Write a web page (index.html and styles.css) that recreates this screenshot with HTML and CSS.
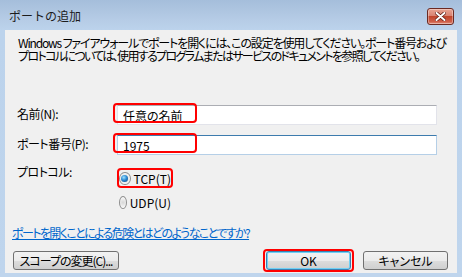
FILE: index.html
```html
<!DOCTYPE html>
<html lang="ja">
<head>
    <meta charset="UTF-8">
    <title>ポートの追加</title>
    <link rel="stylesheet" href="styles.css">
</head>
<body>
    <div class="window">
        <div class="titlebar">
            <span class="title">ポートの追加</span>
            <button class="close" aria-label="閉じる">
                <svg width="11" height="9" viewBox="0 0 11 9">
                    <path d="M1.5 1 L9.5 8 M9.5 1 L1.5 8" stroke="#5a1a12" stroke-width="3.4" stroke-linecap="round"/>
                    <path d="M1.5 1 L9.5 8 M9.5 1 L1.5 8" stroke="#fff" stroke-width="2" stroke-linecap="round"/>
                </svg>
            </button>
        </div>

        <div class="client">
            <p class="desc"><span class="line1">Windows ファイアウォールでポートを開くには、この設定を使用してください。ポート番号および</span><br><span class="line2">プロトコルについては、使用するプログラムまたはサービスのドキュメントを参照してください。</span></p>

            <div class="form">
                <label class="label">名前(N):</label>
                <div class="field">
                    <input class="textbox" type="text" value="任意の名前">
                    <span class="mark mark-name"></span>
                </div>

                <label class="label">ポート番号(P):</label>
                <div class="field">
                    <input class="textbox focused" type="text" value="1975">
                    <span class="mark mark-port"></span>
                </div>

                <label class="label label-proto">プロトコル:</label>
                <div class="options">
                    <div class="option marked"><span class="radio checked"></span>TCP(T)</div>
                    <div class="option"><span class="radio"></span>UDP(U)</div>
                </div>
            </div>

            <a class="help" href="#">ポートを開くことによる危険とはどのようなことですか?</a>

            <div class="buttons">
                <button class="btn btn-scope">スコープの変更(C)...</button>
                <span class="ok-wrap"><button class="btn btn-ok">OK</button></span>
                <button class="btn">キャンセル</button>
            </div>
        </div>
    </div>
</body>
</html>
```

FILE: styles.css
```css
* {
    margin: 0;
    padding: 0;
    box-sizing: border-box;
}
body {
    font-family: "Noto Sans CJK JP", sans-serif;
    font-size: 12px;
    color: #000;
    background: #fff;
}
.window {
    width: 462px;
    height: 277px;
    background: linear-gradient(to bottom, #a5bedb 0px, #b6cce6 20px, #bcd3ec 30px, #bfd5ed 100%);
    display: flex;
    flex-direction: column;
    overflow: hidden;
}
.titlebar {
    height: 30px;
    display: flex;
    align-items: flex-start;
    justify-content: space-between;
    padding: 0 8px 0 9px;
}
.title {
    margin-top: 8px;
    line-height: 16px;
    font-size: 12px;
    color: #1c1c1c;
}
.close {
    margin-top: 8px;
    width: 27px;
    height: 17px;
    border: 1px solid #6b2a22;
    border-radius: 3px;
    background: linear-gradient(to bottom, #e8a493 0%, #d98372 45%, #c0452c 50%, #d0604a 85%, #e49582 100%);
    box-shadow: inset 0 0 0 1px rgba(255,255,255,0.35);
    display: flex;
    align-items: center;
    justify-content: center;
}
.client {
    flex: 1;
    margin: 0 5px 4px 5px;
    background: #f0f0f0;
    padding: 6px 9px 0 7px;
    display: flex;
    flex-direction: column;
}
.desc {
    margin-left: 6px;
    line-height: 13px;
    font-feature-settings: "palt";
    white-space: nowrap;
}
.line1 {
    letter-spacing: -1.15px;
}
.line2 {
    letter-spacing: -1.65px;
}
.form {
    margin: 43px 0 0 5px;
    display: grid;
    grid-template-columns: 100px 320px;
    row-gap: 10px;
    align-items: center;
}
.label {
    font-feature-settings: "palt";
    letter-spacing: -0.5px;
    line-height: 13px;
    margin-top: -3px;
}
.label-proto {
    align-self: start;
    margin-top: 0;
}
.field {
    position: relative;
    height: 20px;
}
.textbox {
    width: 320px;
    height: 20px;
    border: 1px solid #e2e3ea;
    border-top-color: #abadb3;
    background: #fff;
    font-family: "Noto Sans CJK JP", sans-serif;
    font-size: 12px;
    padding: 0 5px;
    outline: none;
    font-feature-settings: "palt";
}
.textbox.focused {
    border-color: #b5cfe7;
    border-top-color: #3d7bad;
}
.mark {
    position: absolute;
    left: -4px;
    top: -2px;
    width: 84px;
    height: 20px;
    border: 2px solid #f00;
    border-radius: 4px;
}
.options {
    margin-top: 3px;
    display: flex;
    flex-direction: column;
    gap: 4px;
}
.option {
    height: 20px;
    width: 56px;
    display: flex;
    align-items: center;
    gap: 3px;
    border: 2px solid transparent;
    border-radius: 4px;
    color: #000;
}
.option.marked {
    border-color: #f00;
}
.radio {
    width: 13px;
    height: 13px;
    border-radius: 50%;
    border: 1px solid #8f8f8f;
    background: radial-gradient(circle at 50% 50%, #d6d6d6 0, #f4f4f4 70%, #fff 100%);
    display: flex;
    align-items: center;
    justify-content: center;
}
.radio.checked::after {
    content: "";
    width: 7px;
    height: 7px;
    border-radius: 50%;
    background: radial-gradient(circle at 40% 35%, #9fe2ff 0, #2e8bd4 45%, #0b3f7a 100%);
}
.help {
    margin-top: 14px;
    line-height: 13px;
    color: #0066cc;
    text-decoration: underline;
    font-feature-settings: "palt";
    letter-spacing: -1.6px;
    white-space: nowrap;
    align-self: flex-start;
}
.buttons {
    margin-top: 10px;
    display: flex;
    align-items: center;
}
.btn {
    height: 19px;
    width: 85px;
    border: 1px solid #707070;
    border-radius: 3px;
    background: linear-gradient(to bottom, #f2f2f2 0%, #ebebeb 50%, #dddddd 51%, #cfcfcf 100%);
    font-family: "Noto Sans CJK JP", sans-serif;
    font-size: 12px;
    color: #000;
    font-feature-settings: "palt";
    line-height: 16px;
    white-space: nowrap;
    padding: 0;
}
.btn-scope {
    width: 106px;
    margin-left: 1px;
    letter-spacing: -1px;
}
.ok-wrap {
    margin-left: auto;
    margin-right: 9px;
    border: 2px solid #f00;
    border-radius: 4px;
    padding: 0 1px;
    display: flex;
}
.btn-ok {
    border-color: #3c7fb1;
    box-shadow: inset 0 0 0 1px #6fd0f5;
}
```
